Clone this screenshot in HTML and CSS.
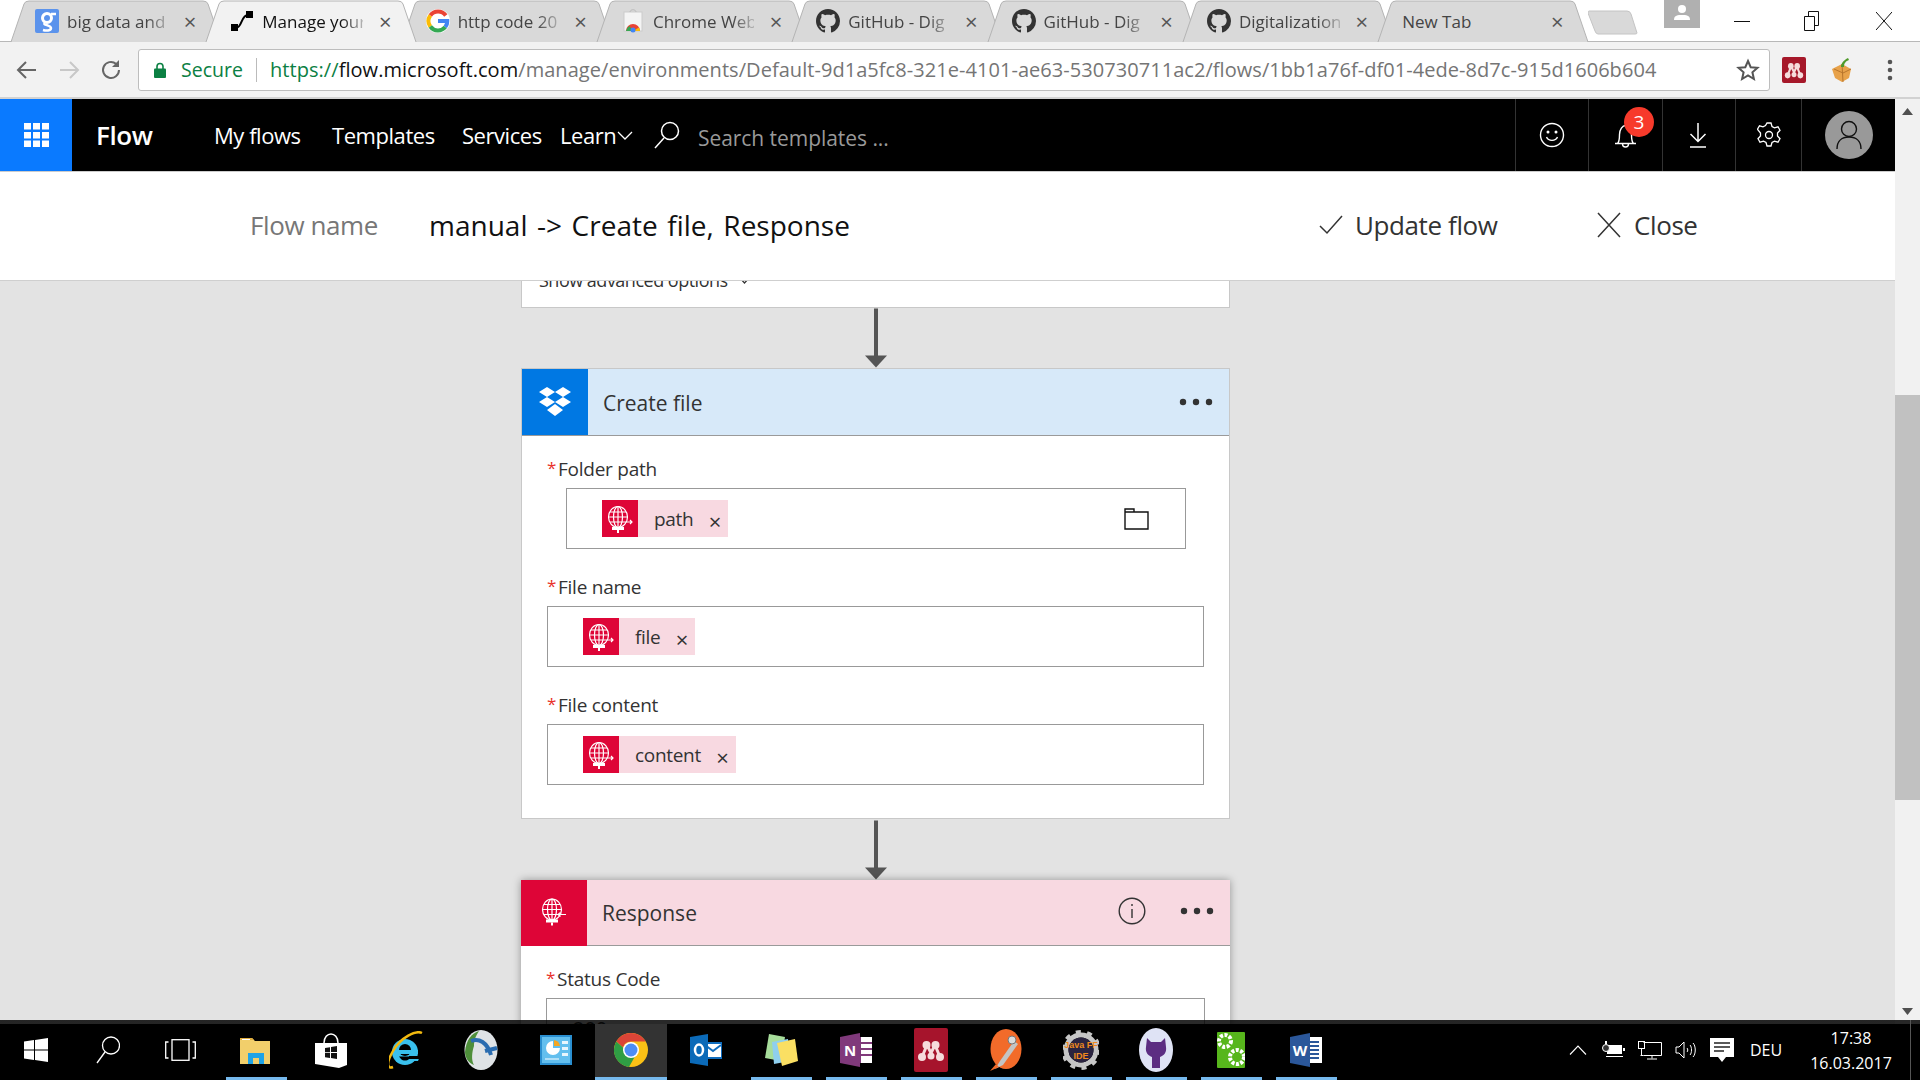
FILE: index.html
```html
<!DOCTYPE html>
<html lang="en">
<head>
<meta charset="utf-8">
<title>Manage your flows</title>
<link rel="stylesheet" href="styles.css">
</head>
<body>
<svg class="defs" aria-hidden="true">
  <symbol id="gh" viewBox="0 0 16 16"><path d="M8 0C3.58 0 0 3.58 0 8c0 3.54 2.29 6.53 5.47 7.59.4.07.55-.17.55-.38 0-.19-.01-.82-.01-1.49-2.01.37-2.53-.49-2.69-.94-.09-.23-.48-.94-.82-1.13-.28-.15-.68-.52-.01-.53.63-.01 1.08.58 1.23.82.72 1.21 1.87.87 2.33.66.07-.52.28-.87.51-1.07-1.78-.2-3.64-.89-3.64-3.95 0-.87.31-1.59.82-2.15-.08-.2-.36-1.02.08-2.12 0 0 .67-.21 2.2.82.64-.18 1.32-.27 2-.27.68 0 1.36.09 2 .27 1.53-1.04 2.2-.82 2.2-.82.44 1.1.16 1.92.08 2.12.51.56.82 1.27.82 2.15 0 3.07-1.87 3.75-3.65 3.95.29.25.54.73.54 1.48 0 1.07-.01 1.93-.01 2.2 0 .21.15.46.55.38A8.013 8.013 0 0016 8c0-4.42-3.58-8-8-8z"/></symbol>
  <symbol id="tabshape" viewBox="0 0 212 42" preserveAspectRatio="none"><path d="M1 42 L14 4 Q15 1 19 1 L193 1 Q197 1 198 4 L211 42"/></symbol>
  <symbol id="globe" viewBox="0 0 36 36"><g fill="none" stroke="#fff" stroke-width="1.200"><ellipse cx="16" cy="16.500" rx="9.500" ry="10.500"/><ellipse cx="16" cy="16.500" rx="4.500" ry="10.500"/><path d="M6.500 16.500h19M8 11.500h16M8 21.500h16M16 6v21M23 21.500h7M28 19.500l2 2-2 2"/></g><rect x="10" y="26.500" width="12" height="3" fill="#fff"/><rect x="15" y="29.500" width="2" height="3" fill="#fff"/></symbol>
  <symbol id="globein" viewBox="0 0 36 36"><g fill="none" stroke="#fff" stroke-width="1.200"><ellipse cx="16" cy="16.500" rx="9.500" ry="10.500"/><ellipse cx="16" cy="16.500" rx="4.500" ry="10.500"/><path d="M6.500 16.500h19M8 11.500h16M8 21.500h16M16 6v21M22 21.500h8M24.500 19.500l-2.500 2 2.500 2"/></g><rect x="10" y="26.500" width="12" height="3" fill="#fff"/><rect x="15" y="29.500" width="2" height="3" fill="#fff"/></symbol>
  <symbol id="dots" viewBox="0 0 34 8"><circle cx="4" cy="4" r="3.200"/><circle cx="17" cy="4" r="3.200"/><circle cx="30" cy="4" r="3.200"/></symbol>
  <symbol id="arrow" viewBox="0 0 22 60"><rect x="9" y="1" width="4" height="50"/><path d="M0 48h22L11 60z"/></symbol>
  <symbol id="mendeley" viewBox="0 0 34 34"><g fill="none" stroke="#f6dcdc" stroke-width="3"><path d="M8 24L13 12 17 20 21 12 26 24"/></g><g fill="#f6dcdc"><circle cx="8" cy="24" r="4"/><circle cx="17" cy="23" r="3.500"/><circle cx="26" cy="24" r="4"/><circle cx="12.500" cy="12" r="4"/><circle cx="21.500" cy="12" r="4"/></g></symbol>
</svg>

<header class="chrome">
  <div class="tabstrip">
    <div class="tabs">
      <div class="tab">
        <svg class="tab-shape"><use href="#tabshape"/></svg>
        <svg class="fav" viewBox="0 0 24 24"><rect width="24" height="24" rx="2" fill="#5b93ec"/><circle cx="12" cy="9" r="4.500" fill="none" stroke="#fff" stroke-width="3"/><path d="M16 5h5M10 14c-3 2 6 2 6 5s-5 3-8 2" fill="none" stroke="#fff" stroke-width="2.500"/></svg>
        <span class="tab-text">big data and</span><span class="tab-x">×</span>
      </div>
      <div class="tab active">
        <svg class="tab-shape"><use href="#tabshape"/></svg>
        <svg class="fav" viewBox="0 0 24 24"><rect x="1" y="15" width="7" height="7"/><rect x="16" y="2" width="7" height="7"/><path d="M6 19c6 0 5-13 12-13" fill="none" stroke="#000" stroke-width="2"/></svg>
        <span class="tab-text dark">Manage your</span><span class="tab-x">×</span>
      </div>
      <div class="tab">
        <svg class="tab-shape"><use href="#tabshape"/></svg>
        <svg class="fav" viewBox="0 0 24 24"><circle cx="12" cy="12" r="12" fill="#fff"/><path d="M19.800 6.500A9.500 9.500 0 0 0 4.300 6.500" fill="none" stroke="#ea4335" stroke-width="4"/><path d="M4.300 6.500a9.500 9.500 0 0 0 0 11" fill="none" stroke="#fbbc05" stroke-width="4"/><path d="M4.300 17.500a9.500 9.500 0 0 0 15 .5" fill="none" stroke="#34a853" stroke-width="4"/><path d="M19.300 18a9 9 0 0 0 2-6H12" fill="none" stroke="#4285f4" stroke-width="4"/></svg>
        <span class="tab-text">http code 20</span><span class="tab-x">×</span>
      </div>
      <div class="tab">
        <svg class="tab-shape"><use href="#tabshape"/></svg>
        <svg class="fav" viewBox="0 0 24 24"><rect x="3" y="3" width="18" height="19" fill="#f4f4f4" stroke="#ccc"/><path d="M9 3c0-3 6-3 6 0" fill="none" stroke="#bbb"/><path d="M5 22a7 7 0 0 1 14 0z" fill="#ea4335"/><path d="M12 22h7a7 7 0 0 0-1-3.500z" fill="#fbbc05"/><path d="M5 22h7l-3.500-5a7 7 0 0 0-3.500 5z" fill="#34a853"/><circle cx="12" cy="21" r="2.500" fill="#4285f4"/></svg>
        <span class="tab-text">Chrome Web</span><span class="tab-x">×</span>
      </div>
      <div class="tab">
        <svg class="tab-shape"><use href="#tabshape"/></svg>
        <svg class="fav fav-gh"><use href="#gh"/></svg>
        <span class="tab-text">GitHub - Dig</span><span class="tab-x">×</span>
      </div>
      <div class="tab">
        <svg class="tab-shape"><use href="#tabshape"/></svg>
        <svg class="fav fav-gh"><use href="#gh"/></svg>
        <span class="tab-text">GitHub - Dig</span><span class="tab-x">×</span>
      </div>
      <div class="tab">
        <svg class="tab-shape"><use href="#tabshape"/></svg>
        <svg class="fav fav-gh"><use href="#gh"/></svg>
        <span class="tab-text">Digitalization</span><span class="tab-x">×</span>
      </div>
      <div class="tab last">
        <svg class="tab-shape"><use href="#tabshape"/></svg>
        <span class="tab-text plain">New Tab</span><span class="tab-x">×</span>
      </div>
    </div>
    <svg class="newtab" viewBox="0 0 50 25"><path d="M1 1h38q3 0 4 3l6 19q0 1-2 1H10q-2 0-3-3L0 3q0-2 1-2z" fill="#d9d9d9" stroke="#c4c4c4"/></svg>
    <div class="profile"><svg viewBox="0 0 36 28" width="36" height="28"><circle cx="18" cy="9" r="4" fill="#fff"/><path d="M10 20c0-5 4-5 8-5s8 0 8 5z" fill="#fff"/></svg></div>
    <div class="winctl">
      <div class="win win-min"><svg width="16" height="16" viewBox="0 0 16 16"><path d="M0 8.500h16" stroke="#111"/></svg></div>
      <div class="win win-max"><svg width="16" height="20" viewBox="0 0 16 20"><path d="M.5 5.500h10v14H.5zM4.500 5.500v-5h10v14h-4" fill="none" stroke="#111"/></svg></div>
      <div class="win win-close"><svg width="16" height="18" viewBox="0 0 16 18"><path d="M0 0l16 18M16 0L0 18" stroke="#111" fill="none"/></svg></div>
    </div>
  </div>
  <div class="toolbar">
    <svg class="tool" viewBox="0 0 24 24"><path d="M21 12H4M11 4l-8 8 8 8" fill="none" stroke="#666" stroke-width="2"/></svg>
    <svg class="tool" viewBox="0 0 24 24"><path d="M3 12h17M13 4l8 8-8 8" fill="none" stroke="#c8c8c8" stroke-width="2"/></svg>
    <svg class="tool" viewBox="0 0 24 24"><path d="M20 12a8 8 0 1 1-3-6.300" fill="none" stroke="#666" stroke-width="2"/><path d="M20 2v7h-7z" fill="#666"/></svg>
    <div class="omnibox">
      <svg class="lock" viewBox="0 0 12 16"><path d="M3 7V4.500a3 3 0 0 1 6 0V7" fill="none" stroke="#0b8043" stroke-width="1.600"/><rect y="6.500" width="12" height="9.500" rx="1" fill="#0b8043"/></svg>
      <span class="secure">Secure</span>
      <span class="omni-sep"></span>
      <span class="url"><span class="url-green">https://</span><span class="url-host">flow.microsoft.com</span>/manage/environments/Default-9d1a5fc8-321e-4101-ae63-530730711ac2/flows/1bb1a76f-df01-4ede-8d7c-915d1606b604</span>
      <svg class="star" viewBox="0 0 24 24"><path d="M12 3l2.700 6.200 6.800.6-5.100 4.500 1.500 6.700L12 17.500 6.100 21l1.500-6.700L2.500 9.800l6.800-.6z" fill="none" stroke="#555" stroke-width="2"/></svg>
    </div>
    <div class="ext"><svg class="ext-m" width="24" height="26" viewBox="0 0 34 34" preserveAspectRatio="none"><use href="#mendeley"/></svg></div>
    <div class="ext"><svg viewBox="0 0 24 26" width="24" height="26"><path d="M12 7l9 5-2 9-7 4-7-4-3-9z" fill="#e8a24a"/><path d="M12 7l1 18M4 12l9 4 8-4" stroke="#b8752c" fill="none"/><path d="M11 10c0-4 3-7 7-9l1 2c-3 1-5 3-5 7z" fill="#4f9a2b"/></svg></div>
    <div class="ext"><svg viewBox="0 0 6 24" width="6" height="24"><circle cx="3" cy="4" r="2.300" fill="#555"/><circle cx="3" cy="12" r="2.300" fill="#555"/><circle cx="3" cy="20" r="2.300" fill="#555"/></svg></div>
  </div>
</header>

<div class="viewport">
  <div class="page">
    <nav class="appbar">
      <div class="waffle"><svg width="25" height="24" viewBox="0 0 25 24" fill="#fff"><rect width="7" height="6.500"/><rect x="9" width="7" height="6.500"/><rect x="18" width="7" height="6.500"/><rect y="9" width="7" height="6.500"/><rect x="9" y="9" width="7" height="6.500"/><rect x="18" y="9" width="7" height="6.500"/><rect y="17.500" width="7" height="6.500"/><rect x="9" y="17.500" width="7" height="6.500"/><rect x="18" y="17.500" width="7" height="6.500"/></svg></div>
      <span class="brand">Flow</span>
      <a class="navlink nav-flows">My flows</a>
      <a class="navlink nav-templates">Templates</a>
      <a class="navlink nav-services">Services</a>
      <a class="navlink nav-learn">Learn<svg width="16" height="9" viewBox="0 0 16 9"><path d="M1 1l7 7 7-7" fill="none" stroke="#fff" stroke-width="1.300"/></svg></a>
      <svg class="search-ico" width="26" height="28" viewBox="0 0 26 28"><circle cx="16" cy="10" r="8.500" fill="none" stroke="#fff" stroke-width="1.500"/><path d="M10 17L1 27" stroke="#fff" stroke-width="1.500"/></svg>
      <span class="search-text">Search templates ...</span>
      <div class="nav-right">
        <div class="navcell cell-a"><svg width="26" height="26" viewBox="0 0 26 26" fill="none" stroke="#fff" stroke-width="1.400"><circle cx="13" cy="13" r="11.500"/><path d="M7.500 15c2 4.500 9 4.500 11 0"/><circle cx="9" cy="10" r=".8" fill="#fff"/><circle cx="17" cy="10" r=".8" fill="#fff"/></svg></div>
        <div class="navcell cell-b"><svg width="24" height="26" viewBox="0 0 24 26" fill="none" stroke="#fff" stroke-width="1.400"><path d="M1 21.500h21M3.500 21.500c2-2 2-5 2-9 0-5 3-9 6-9s6 4 6 9c0 4 0 7 2 9M8.500 22c0 4 6 4 6 0"/></svg><span class="badge">3</span></div>
        <div class="navcell cell-c"><svg class="dl" width="18" height="26" viewBox="0 0 18 26" fill="none" stroke="#fff" stroke-width="1.500"><path d="M9 1v18M1.500 12L9 19.500 16.500 12M1 25h16"/></svg></div>
        <div class="navcell cell-d"><svg width="24" height="26" viewBox="0 0 24 26" fill="none" stroke="#fff" stroke-width="1.300"><circle cx="12" cy="13" r="3.500"/><path d="M10 1h4l1 3.500 2.500 1.300 3.500-1 2 3.500-2.500 2.700v3l2.500 2.700-2 3.500-3.500-1-2.500 1.300-1 3.500h-4l-1-3.500-2.500-1.300-3.500 1-2-3.500 2.500-2.700v-3L.5 7.300l2-3.500 3.500 1 2.500-1.300z"/></svg></div>
        <div class="navcell cell-e"><div class="avatar"><svg width="28" height="32" viewBox="0 0 28 32" fill="none" stroke="#111" stroke-width="1.400"><circle cx="14" cy="10" r="7.500"/><path d="M2 30c0-8 5-12 12-12s12 4 12 12"/></svg></div></div>
      </div>
    </nav>
    <div class="titlebar">
      <span class="flow-label">Flow name</span>
      <span class="flow-name">manual -&gt; Create file, Response</span>
      <div class="action act-update"><svg width="24" height="20" viewBox="0 0 24 20"><path d="M1 11l7 7L23 1" fill="none" stroke="#333" stroke-width="1.500"/></svg><span>Update flow</span></div>
      <div class="action act-close"><svg width="24" height="26" viewBox="0 0 24 26"><path d="M1 1l22 24M23 1L1 25" fill="none" stroke="#333" stroke-width="1.500"/></svg><span>Close</span></div>
    </div>
    <main class="canvas">
      <section class="card card-prev">
        <div class="advanced">Show advanced options <svg width="13" height="8" viewBox="0 0 13 8"><path d="M1 1l5.500 6L12 1" fill="none" stroke="#333" stroke-width="1.300"/></svg></div>
      </section>
      <svg class="flow-arrow"><use href="#arrow"/></svg>
      <section class="card">
        <header class="card-head head-blue">
          <div class="head-icon icon-blue"><svg width="32" height="30" viewBox="0 0 32 30" fill="#fff"><path d="M8 0l8 5-8 5-8-5zM24 0l8 5-8 5-8-5zM8 10l8 5-8 5-8-5zM24 10l8 5-8 5-8-5zM16 17l8 6-8 6-8-6z"/></svg></div>
          <h2 class="card-title">Create file</h2>
          <svg class="more"><use href="#dots"/></svg>
        </header>
        <div class="card-body">
          <div class="field">
            <label class="field-label"><span class="req">*</span>Folder path</label>
            <div class="box box-indent">
              <span class="token"><svg class="token-icon" viewBox="0 0 36 36"><use href="#globe"/></svg><span class="token-text">path</span><span class="token-x">×</span></span>
              <svg class="folder" width="25" height="22" viewBox="0 0 25 22" fill="none" stroke="#111" stroke-width="1.400"><path d="M1 4h23v17H1zM1 4V1h9v3"/></svg>
            </div>
          </div>
          <div class="field">
            <label class="field-label"><span class="req">*</span>File name</label>
            <div class="box">
              <span class="token"><svg class="token-icon" viewBox="0 0 36 36"><use href="#globe"/></svg><span class="token-text">file</span><span class="token-x">×</span></span>
            </div>
          </div>
          <div class="field">
            <label class="field-label"><span class="req">*</span>File content</label>
            <div class="box">
              <span class="token"><svg class="token-icon" viewBox="0 0 36 36"><use href="#globe"/></svg><span class="token-text">content</span><span class="token-x">×</span></span>
            </div>
          </div>
        </div>
      </section>
      <svg class="flow-arrow"><use href="#arrow"/></svg>
      <section class="card card-raised">
        <header class="card-head head-pink">
          <div class="head-icon icon-red"><svg width="36" height="36" viewBox="0 0 36 36"><use href="#globein"/></svg></div>
          <h2 class="card-title">Response</h2>
          <svg class="info" width="28" height="28" viewBox="0 0 28 28" fill="none" stroke="#333" stroke-width="1.400"><circle cx="14" cy="14" r="12.800"/><path d="M14 12v9M14 7v2"/></svg>
          <svg class="more more-near"><use href="#dots"/></svg>
        </header>
        <div class="card-body">
          <div class="field">
            <label class="field-label"><span class="req">*</span>Status Code</label>
            <div class="box box-text">200</div>
          </div>
        </div>
      </section>
    </main>
  </div>
  <aside class="scrollbar">
    <div class="sb-btn"><svg width="11" height="7" viewBox="0 0 11 7"><path d="M5.500 0L11 7H0z" fill="#505050"/></svg></div>
    <div class="sb-track"><div class="sb-thumb"></div></div>
    <div class="sb-btn"><svg width="11" height="7" viewBox="0 0 11 7"><path d="M5.500 7L11 0H0z" fill="#505050"/></svg></div>
  </aside>
</div>

<footer class="taskbar">
  <div class="tb-sys"><svg width="24" height="24" viewBox="0 0 24 24" fill="#fff"><path d="M0 3.500l10-1.400v9.400H0zM11 2l13-2v11.500H11zM0 12.500h10v9.400L0 20.500zM11 12.500h13V24l-13-2z"/></svg></div>
  <div class="tb-sys"><svg width="24" height="28" viewBox="0 0 24 28" fill="none" stroke="#fff" stroke-width="1.300"><circle cx="15" cy="9.500" r="8.500"/><path d="M9 16L1 27"/></svg></div>
  <div class="tb-sys"><svg width="31" height="22" viewBox="0 0 31 22" fill="none" stroke="#fff" stroke-width="1.300"><rect x="7" y=".7" width="17" height="20.600"/><path d="M3.500 3H.7v16h2.800M27.500 3h2.800v16h-2.800"/></svg></div>
  <div class="tb-apps">
    <div class="tb-app run"><svg width="32" height="28" viewBox="0 0 32 28"><path d="M0 2h12l3 3h15v23H0z" fill="#f2cf6b"/><path d="M0 2h12l2 2H0z" fill="#e0ae3f"/><rect x="2" y="3" width="8" height="1" fill="#fff"/><path d="M8 28V17h16v11h-5v-6h-6v6z" fill="#1fa3e6"/></svg></div>
    <div class="tb-app"><svg width="32" height="36" viewBox="0 0 32 36"><path d="M0 11h32v22l-8 3-24-4z" fill="#fff"/><path d="M9 11c0-12 14-12 14 0" fill="none" stroke="#fff" stroke-width="1.500"/><path d="M10 16l5-.8v5H10zM16 15l6-1v6h-6zM10 21h5v5l-5-.8zM16 21h6v6l-6-1z" fill="#111"/></svg></div>
    <div class="tb-app"><svg width="34" height="38" viewBox="0 0 34 38"><circle cx="16" cy="21" r="13" fill="#39c0ed"/><circle cx="16" cy="19" r="6" fill="#000"/><path d="M3 19h26v4H3zM19 25h12l-2 5H19z" fill="#39c0ed"/><path d="M20 25h12v1H20z" fill="#000"/><path d="M10 25.500h22v2.500H20c-2 2-6 2-8 0z" fill="#000"/><path d="M33 2C27-1 12 6 4 20S-1 38 4 36" fill="none" stroke="#f2b90f" stroke-width="2.500"/></svg></div>
    <div class="tb-app"><svg width="34" height="40" viewBox="0 0 34 40"><ellipse cx="17" cy="20" rx="16.500" ry="20" fill="#dfe3e6"/><path d="M1 22C2 10 8 3 15 1c-4 6-5 10-5 15-2 6-3 14 0 19-6-2-9-8-9-13z" fill="#4e8f3a"/><path d="M7 11c8-3 16 1 20 14" fill="none" stroke="#2a6cb0" stroke-width="4"/><path d="M33 18l-12 3" stroke="#2a6cb0" stroke-width="4"/></svg></div>
    <div class="tb-app"><svg width="32" height="30" viewBox="0 0 32 30"><rect width="32" height="30" fill="#2a8fd0"/><rect x="2" y="2" width="28" height="26" fill="#63bfee"/><path d="M13 6a7 7 0 1 0 7 7h-7z" fill="#fff"/><path d="M14 5a7 7 0 0 1 6 6h-6z" fill="#f5a623"/><path d="M22 6h6v3h-6zM22 12h6v3h-6zM22 18h6v3h-6z" fill="#fff" opacity=".85"/><path d="M5 24h14" stroke="#fff"/></svg></div>
    <div class="tb-app tb-active run"><svg width="34" height="34" viewBox="0 0 34 34"><circle cx="17" cy="17" r="17" fill="#fbc116"/><path d="M2.300 8.500A17 17 0 0 1 31.700 8.500H17a8.500 8.500 0 0 0-8 6z" fill="#db4437"/><path d="M2.300 8.500A17 17 0 0 0 15 34l7-12.500A8.500 8.500 0 0 1 9 14.500z" fill="#2f9e44"/><circle cx="17" cy="17" r="8" fill="#fff"/><circle cx="17" cy="17" r="6.500" fill="#4d8df5"/></svg></div>
    <div class="tb-app"><svg width="32" height="32" viewBox="0 0 32 32"><rect x="14" y="9" width="18" height="15" fill="#fff" stroke="#0f6cbd" stroke-width="2"/><path d="M15 11l8 6 8-6" fill="none" stroke="#0f6cbd" stroke-width="2"/><path d="M0 3l18-3v32L0 29z" fill="#0b6ab8"/><ellipse cx="9" cy="16" rx="4" ry="5.500" fill="none" stroke="#fff" stroke-width="2.500"/></svg></div>
    <div class="tb-app run"><svg width="34" height="36" viewBox="0 0 34 36"><path d="M5 2l16 3-4 24-16-3z" fill="#a7dd9b"/><path d="M8 10l16-3 2 22-16 3z" fill="#8fcfee"/><path d="M13 11l18-4 3 22-16 5z" fill="#fadf63"/></svg></div>
    <div class="tb-app run"><svg width="32" height="34" viewBox="0 0 32 34"><rect x="16" y="4" width="16" height="26" fill="#fff"/><path d="M20 4v26M20 10h12M20 16h12M20 22h12" stroke="#80397b" stroke-width="2"/><path d="M0 4l20-4v34L0 30z" fill="#80397b"/><text x="10" y="23" class="ico-letter">N</text></svg></div>
    <div class="tb-app run"><div class="mend"><svg width="34" height="34" viewBox="0 0 34 34"><use href="#mendeley"/></svg></div></div>
    <div class="tb-app run"><svg width="32" height="42" viewBox="0 0 32 42"><ellipse cx="16" cy="20" rx="15.500" ry="20" fill="#f26b2a"/><path d="M5 40l5-8 14-20 4 3-15 21z" fill="#c4c4c4"/><circle cx="22" cy="11" r="4" fill="#dcdcdc" stroke="#777"/><path d="M0 42l6-7 3 3z" fill="#f26b2a"/></svg></div>
    <div class="tb-app run"><svg width="36" height="44" viewBox="0 0 36 44"><circle cx="18" cy="22" r="15" fill="none" stroke="#c6c6c6" stroke-width="5"/><circle cx="18" cy="22" r="18" fill="none" stroke="#c6c6c6" stroke-width="4" stroke-dasharray="5 6.300"/><circle cx="18" cy="22" r="12.500" fill="#2b2440"/><text x="18" y="20" class="ico-java">Java FF</text><text x="18" y="31" class="ico-java">IDE</text></svg></div>
    <div class="tb-app run"><svg width="34" height="44" viewBox="0 0 34 44"><ellipse cx="17" cy="22" rx="17" ry="22" fill="#dfe3f5"/><path d="M8 10l4 4h10l4-4 1 9c1 6-3 9-6 10v11h-8V29c-3-1-7-4-6-10z" fill="#5c2d82"/></svg></div>
    <div class="tb-app run"><svg width="28" height="36" viewBox="0 0 28 36"><rect width="28" height="36" rx="1" fill="#57b61c"/><circle cx="8" cy="9" r="6" fill="none" stroke="#fff" stroke-width="4" stroke-dasharray="3 1.500"/><circle cx="20" cy="25" r="7" fill="none" stroke="#fff" stroke-width="4" stroke-dasharray="3 1.500"/></svg></div>
    <div class="tb-app run"><svg width="32" height="34" viewBox="0 0 32 34"><rect x="16" y="4" width="16" height="26" fill="#fff"/><path d="M19 9h10M19 13h10M19 17h10M19 21h10M19 25h10" stroke="#2b579a" stroke-width="2"/><path d="M0 4l20-4v34L0 30z" fill="#2b579a"/><text x="10" y="23" class="ico-letter">W</text></svg></div>
  </div>
  <div class="tray">
    <div class="tray-i"><svg width="18" height="10" viewBox="0 0 18 10"><path d="M1 9.500L9 1l8 8.500" fill="none" stroke="#fff" stroke-width="1.100"/></svg></div>
    <div class="tray-i"><svg width="24" height="18" viewBox="0 0 24 18" fill="#fff"><rect x="5" y="4" width="15" height="9"/><rect x="21" y="7" width="2" height="3"/><rect x="4" y="15" width="17" height="1"/><circle cx="4" cy="7" r="3.500" fill="#333" stroke="#fff"/><rect x="3" y="0" width="2" height="3"/></svg></div>
    <div class="tray-i"><svg width="24" height="19" viewBox="0 0 24 19" fill="none" stroke="#fff"><path d="M5.500 1.500h18v13h-18M5.500 14.500h-3M14 14.500v3M9 18h10"/><rect x=".5" y=".5" width="6" height="7"/><path d="M3.500 7.500v7"/></svg></div>
    <div class="tray-i"><svg width="22" height="18" viewBox="0 0 22 18" fill="none" stroke="#fff"><path d="M1 6h3l5-5v16l-5-5H1zM12 7c1 1 1 3 0 4M15 4c2 2 2 8 0 10M18 2c3 3 3 11 0 14"/></svg></div>
    <div class="tray-i"><svg width="24" height="24" viewBox="0 0 24 24"><path d="M0 0h24v19h-8l-4 5-4-5H0z" fill="#fff"/><path d="M4 5h16M4 9h16M4 13h10" stroke="#222" stroke-width="1.500"/></svg></div>
    <div class="tray-lang">DEU</div>
    <div class="clock"><span>17:38</span><span>16.03.2017</span></div>
    <div class="show-desktop"></div>
  </div>
</footer>
</body>
</html>
```
FILE: styles.css
```css
* { box-sizing: border-box; }
html, body { margin: 0; padding: 0; }
body {
  position: relative;
  width: 1920px;
  height: 1080px;
  overflow: hidden;
  background: #fff;
  font-family: "Open Sans", "Noto Sans", sans-serif;
  color: #333;
}
svg { display: block; flex: none; }
.defs { position: absolute; width: 0; height: 0; }

/* browser chrome */
.chrome { height: 99px; border-bottom: 2px solid #d2d2d2; background: #f2f2f2; }
.tabstrip { display: flex; height: 42px; background: #fff; box-shadow: inset 0 -1px 0 #b8b8b8; }
.tabs { display: flex; padding-left: 10px; }
.tab {
  position: relative;
  display: flex;
  align-items: center;
  width: 212px;
  height: 42px;
  margin-right: -16.7px;
  padding: 0 22px 0 25px;
  z-index: 1;
}
.tab.last { margin-right: 0; }
.tab.active { z-index: 2; }
.tab-shape { position: absolute; left: 0; top: 0; width: 212px; height: 42px; z-index: -1; fill: #d9d9d9; stroke: #b4b4b4; }
.tab.active .tab-shape { fill: #f2f2f2; }
.fav { width: 24px; height: 24px; margin-right: 8px; }
.fav-gh { fill: #333; }
.tab-text {
  flex: 1;
  overflow: hidden;
  white-space: nowrap;
  margin-right: 12px;
  font-size: 17px;
  color: #444;
  -webkit-mask-image: linear-gradient(90deg, #000 78%, rgba(0,0,0,.25) 100%);
  mask-image: linear-gradient(90deg, #000 78%, rgba(0,0,0,.25) 100%);
}
.tab-text.plain { -webkit-mask-image: none; mask-image: none; }
.tab-text.dark { color: #111; }
.tab-x { width: 20px; text-align: center; font-size: 22px; line-height: 1; color: #555; }
.newtab { width: 50px; height: 25px; margin: 10px 0 0 -1px; }
.profile { width: 36px; height: 28px; margin-left: 26px; background: #b0b0b0; }
.winctl { display: flex; margin-left: auto; }
.win { display: flex; justify-content: center; align-items: center; height: 42px; }
.win-min, .win-max { width: 70px; }
.win-close { width: 73px; }

.toolbar { display: flex; align-items: center; height: 55px; padding-left: 6px; background: #f2f2f2; }
.tool { width: 42px; height: 24px; }
.omnibox {
  display: flex;
  align-items: center;
  width: 1632px;
  height: 42px;
  margin-left: 6px;
  padding: 0 9px 0 15px;
  background: #fff;
  border: 1px solid #bdbdbd;
  border-radius: 3px;
}
.lock { width: 12px; height: 16px; }
.secure { margin-left: 15px; width: 75px; font-size: 19.500px; color: #0b8043; }
.omni-sep { width: 1px; height: 24px; background: #bbb; }
.url { margin-left: 13px; font-size: 20px; letter-spacing: .05px; color: #757575; white-space: nowrap; }
.url-green { color: #0b8043; }
.url-host { color: #111; }
.star { width: 24px; height: 24px; margin-left: auto; }
.ext { display: flex; justify-content: center; align-items: center; width: 48px; }
.ext:first-of-type { margin-left: 6px; }
.ext-m { background: #a6182a; border-radius: 2px; }

/* main area */
.viewport { display: flex; height: 925px; }
.page { flex: 1; min-width: 0; display: flex; flex-direction: column; overflow: hidden; background: #e3e3e3; }
.scrollbar { display: flex; flex-direction: column; width: 25px; background: #f1f1f1; }
.sb-btn { display: flex; justify-content: center; align-items: center; height: 25px; }
.sb-track { flex: 1; }
.sb-thumb { width: 25px; height: 405px; margin-top: 271px; background: #c1c1c1; }

/* app bar */
.appbar { display: flex; align-items: center; flex: none; height: 72px; background: #000; color: #fff; }
.waffle { display: flex; justify-content: center; align-items: center; width: 72px; height: 72px; background: #0a7aff; }
.brand { width: 118px; margin-left: 24px; font-size: 26px; font-weight: 600; letter-spacing: -.4px; }
.navlink { display: flex; align-items: center; font-size: 22px; letter-spacing: -.45px; white-space: nowrap; }
.nav-flows { width: 118px; }
.nav-templates { width: 130px; }
.nav-services { width: 98px; }
.nav-learn { width: 94px; gap: 1px; }
.search-ico { margin-right: 18px; }
.search-text { margin-top: 6px; font-size: 21px; letter-spacing: -.05px; color: #999; }
.nav-right { display: flex; margin-left: auto; height: 72px; }
.navcell { position: relative; display: flex; justify-content: center; align-items: center; border-left: 1px solid #333; }
.cell-a { width: 73px; }
.cell-b { width: 74px; }
.cell-c { width: 73px; }
.cell-d { width: 66px; }
.cell-e { width: 94px; }
.dl { margin-right: 2px; }
.badge {
  position: absolute;
  left: 35px;
  top: 8px;
  width: 30px;
  height: 30px;
  border-radius: 50%;
  background: #f73a2b;
  color: #fff;
  font-size: 19px;
  line-height: 30px;
  text-align: center;
}
.avatar { display: flex; justify-content: center; align-items: center; width: 48px; height: 48px; border-radius: 50%; background: #999; }

/* title bar */
.titlebar { display: flex; align-items: center; flex: none; height: 110px; padding: 0 0 3px 250px; background: #fff; border-top: 1px solid #ccc; border-bottom: 1px solid #cfcfcf; position: relative; z-index: 1; }
.flow-label { width: 179px; font-size: 26px; letter-spacing: -.4px; color: #777; }
.flow-name { width: 890px; font-size: 28px; word-spacing: 2.300px; color: #111; white-space: nowrap; }
.action { display: flex; align-items: center; font-size: 26px; letter-spacing: -.4px; color: #333; }
.act-update { width: 278px; gap: 12px; }
.act-close { gap: 13px; }

/* flow canvas */
.canvas { display: flex; flex-direction: column; width: 709px; margin-left: 521px; flex: 1; }
.card { background: #fff; border: 1px solid #c8c8c8; flex: none; }
.card-prev { height: 27px; margin-bottom: -1px; border-top: 0; overflow: hidden; padding-left: 17px; }
.advanced { display: flex; align-items: center; gap: 10px; height: 24px; margin-top: -13px; font-size: 18px; letter-spacing: -.5px; }
.flow-arrow { align-self: center; width: 22px; height: 61px; fill: #555; }
.card-raised { border: 0; box-shadow: 0 0 8px rgba(0,0,0,.35); }
.card-head { display: flex; align-items: center; height: 67px; border-bottom: 1px solid #9a9a9a; }
.card-raised .card-head { height: 66px; }
.head-blue { background: #d7e9f9; }
.head-pink { background: #f8d9e1; }
.head-icon { display: flex; justify-content: center; align-items: center; width: 66px; height: 66px; }
.icon-blue { background: #0078e3; }
.icon-red { background: #de0537; }
.icon-red svg { margin-top: -4px; }
.card-title { flex: 1; margin: 0 0 0 15px; font-size: 21px; font-weight: 400; color: #333; }
.head-blue .card-title { margin-top: 2px; }
.more { width: 34px; height: 8px; margin-right: 16px; margin-top: -3px; fill: #333; }
.head-blue .more { margin-top: -1px; }
.more-near { margin-left: 34px; }
.info { margin-top: -4px; }
.card-body { padding: 21px 25px 33px; display: flex; flex-direction: column; gap: 26px; }
.field { display: flex; flex-direction: column; gap: 7px; }
.field-label { display: flex; align-items: center; height: 24px; font-size: 19px; letter-spacing: -.25px; color: #333; }
.req { width: 11px; color: #e8312a; font-size: 17px; margin-top: -4px; }
.box { display: flex; align-items: center; height: 61px; padding-left: 35px; border: 1px solid #999; background: #fff; }
.box-indent { margin-left: 19px; margin-right: 18px; }
.box-text { padding-left: 26px; font-size: 20px; }
.token { display: flex; align-items: center; height: 37px; background: #f8d9e1; }
.token-icon { width: 36px; height: 37px; background: #de0537; }
.token-text { margin-left: 16px; font-size: 19px; letter-spacing: -.3px; color: #333; }
.token-x { width: 35px; margin-top: 4px; padding-left: 8px; text-align: center; font-size: 22px; line-height: 1; color: #333; }
.folder { margin-left: auto; margin-right: 36px; }

/* taskbar */
.taskbar {
  position: absolute;
  left: 0;
  top: 1020px;
  display: flex;
  width: 1920px;
  height: 60px;
  background: linear-gradient(rgba(0,0,0,.84) 4px, #000 4px);
  color: #fff;
}
.tb-sys { display: flex; justify-content: center; align-items: center; width: 72px; }
.tb-apps { display: flex; margin-left: 2px; }
.tb-app { position: relative; display: flex; justify-content: center; align-items: center; width: 72px; margin: 0 1.5px; }
.tb-app.run::after { content: ""; position: absolute; left: 6px; right: 5px; bottom: 0; height: 3px; background: #76b9ed; }
.tb-active { background: linear-gradient(transparent 4px, #333 4px); }
.tb-app.tb-active::after { left: 0; right: 0; }
.mend { display: flex; justify-content: center; align-items: center; width: 34px; height: 44px; border-radius: 2px; background: #a6142c; }
.ico-letter { fill: #fff; font-family: "Open Sans", sans-serif; font-size: 15px; font-weight: 700; text-anchor: middle; }
.ico-java { fill: #f08a1d; font-family: "Liberation Sans", sans-serif; font-size: 9px; font-weight: 700; text-anchor: middle; }
.tray { display: flex; margin-left: auto; }
.tray-i { display: flex; justify-content: center; align-items: center; width: 36px; }
.tray-lang { display: flex; align-items: center; justify-content: center; width: 52px; font-size: 16px; }
.clock { display: flex; flex-direction: column; align-items: center; justify-content: center; gap: 3px; width: 118px; font-size: 16px; line-height: 22px; }
.show-desktop { width: 10px; border-left: 1px solid #555; }
```
